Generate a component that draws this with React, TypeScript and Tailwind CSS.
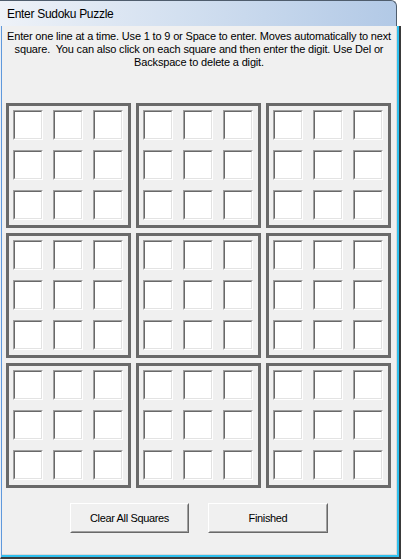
import React from "react";

const font = { fontFamily: '"Liberation Sans", Arial, sans-serif' };

function Cell() {
  return (
    <div className="w-[30px] h-[30px] border border-t-[#a0a0a0] border-l-[#a0a0a0] border-r-white border-b-white">
      <div className="w-full h-full border border-t-[#696969] border-l-[#696969] border-r-[#e3e3e3] border-b-[#e3e3e3] bg-white" />
    </div>
  );
}

function Block() {
  return (
    <div className="w-[125px] h-[125px] border-[3px] border-[#696969] pt-[4px] pl-[4px] box-border">
      <div className="grid grid-cols-[30px_30px_30px] gap-[10px]">
        {Array.from({ length: 9 }).map((_, i) => (
          <Cell key={i} />
        ))}
      </div>
    </div>
  );
}

function Button({ label, w }: { label: string; w: string }) {
  return (
    <div className={`${w} h-[30px] border border-t-white border-l-white border-r-[#696969] border-b-[#696969]`}>
      <div className="w-full h-full border border-t-[#f0f0f0] border-l-[#f0f0f0] border-r-[#a0a0a0] border-b-[#a0a0a0] bg-[#f0f0f0] flex items-center justify-center text-[11px] text-black tracking-[-0.35px]">
        {label}
      </div>
    </div>
  );
}

export default function App() {
  return (
    <div className="w-[401px] h-[559px] flex flex-col bg-white overflow-hidden" style={font}>
      <div className="flex h-[26px]">
        <div className="w-[397px] h-[26px] border-t border-r border-[#4f5d6d] rounded-tr-[6px] bg-[linear-gradient(to_right,#eef2f8,#d3e0f0_45%,#b2c9e6)] flex items-center pl-[7px] pt-[1px] text-[12px] tracking-[-0.3px] text-black">
          Enter Sudoku Puzzle
        </div>
        <div className="flex-1 bg-white" />
      </div>
      <div className="flex-1 flex flex-col border-l border-l-[#e9eef6] border-r-2 border-b-2 border-r-[#3a3a3a] border-b-[#3a3a3a]">
        <div className="flex-1 flex flex-col border-l border-l-[#5f99dc] border-r-2 border-b-2 border-r-[#2fc0ee] border-b-[#2fc0ee]">
          <div className="flex-1 flex flex-col bg-[#f0f0f0] border-r border-b border-r-[#dadada] border-b-[#dadada]">
            <div className="pt-[4px] text-center text-[11px] leading-[13px] text-black whitespace-pre tracking-[-0.17px]">
              <div>Enter one line at a time. Use 1 to 9 or Space to enter. Moves automatically to next</div>
              <div>square.  You can also click on each square and then enter the digit. Use Del or</div>
              <div>Backspace to delete a digit.</div>
            </div>
            <div className="mt-[34px] ml-[4px] grid grid-cols-[125px_125px_125px] gap-[5px]">
              {Array.from({ length: 9 }).map((_, i) => (
                <Block key={i} />
              ))}
            </div>
            <div className="mt-[15px] flex justify-center gap-[19px]">
              <Button label="Clear All Squares" w="w-[119px]" />
              <Button label="Finished" w="w-[120px]" />
            </div>
          </div>
        </div>
      </div>
    </div>
  );
}
